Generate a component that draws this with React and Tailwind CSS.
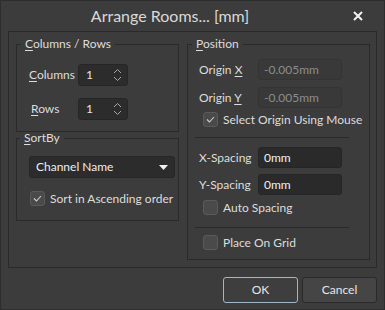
import React from 'react'

const font = { fontFamily: 'Lato, "Open Sans", sans-serif' }

function Check({ checked, label }) {
    return (
        <div className="flex items-center gap-[5px] h-[15px]">
            <div className="w-[15px] h-[15px] rounded-[3px] bg-[#4a4a4a] border border-[#5a5a5a] flex items-center justify-center">
                {checked && (
                    <svg width="11" height="11" viewBox="0 0 11 11">
                        <polyline points="2,5.5 4.5,8 9,3" fill="none" stroke="#cfcfcf" strokeWidth="1.1" />
                    </svg>
                )}
            </div>
            <span className="text-[12px] text-[#dcdcdc] leading-none">{label}</span>
        </div>
    )
}

function Spin({ value }) {
    return (
        <div className="w-[50px] h-[22px] rounded-[3px] bg-[#2c2c2c] border border-[#262626] flex items-center justify-between pl-[7px] pr-[5px]">
            <span className="text-[12px] text-[#e6e6e6] leading-none">{value}</span>
            <svg width="9" height="14" viewBox="0 0 9 14">
                <polyline points="1,5 4.5,1.5 8,5" fill="none" stroke="#a8a8a8" strokeWidth="1" />
                <polyline points="1,9 4.5,12.5 8,9" fill="none" stroke="#a8a8a8" strokeWidth="1" />
            </svg>
        </div>
    )
}

function Field({ label, value, disabled }) {
    return (
        <div className="flex items-center h-[21px]">
            <span className="w-[59px] text-[12px] text-[#dcdcdc] leading-none">{label}</span>
            <div className={`w-[84px] h-[21px] rounded-[3px] flex items-center pl-[5px] text-[12px] leading-none ${disabled ? 'bg-[#393939] border border-[#343434] text-[#8c8c8c]' : 'bg-[#2a2a2a] border border-[#262626] text-[#f0f0f0]'}`}>
                {value}
            </div>
        </div>
    )
}

export default function App() {
    return (
        <div className="w-[385px] h-[310px] bg-[#3c3c3c] border border-[#2d2d2d] flex flex-col" style={font}>
            {/* Title bar */}
            <div className="h-[30px] flex items-center">
                <div className="flex-1 flex justify-center">
                    <span className="text-[16px] text-[#d9d9d9] leading-none">Arrange Rooms... [mm]</span>
                </div>
                <div className="w-[45px] flex justify-center pr-[7px]">
                    <svg width="10" height="10" viewBox="0 0 10 10">
                        <path d="M1 1 L9 9 M9 1 L1 9" stroke="#f2f2f2" strokeWidth="2" />
                    </svg>
                </div>
            </div>

            {/* Main panel */}
            <div className="mx-[7px] h-[237px] border border-[#2a2a2a] flex gap-[8px] pl-[7px] pr-[6px] pt-[6px] pb-[7px]">
                {/* Left column */}
                <div className="w-[163px] flex flex-col">
                    <fieldset className="h-[94px] border border-[#2a2a2a]">
                        <legend className="ml-[4px] px-[4px] text-[12px] leading-[12px] text-[#dcdcdc]">
                            <u className="underline-offset-2">C</u>olumns / Rows
                        </legend>
                        <div className="pl-[12px] pt-[14px] flex flex-col gap-[12px]">
                            <div className="flex items-center">
                                <span className="w-[49px] text-[12px] text-[#dcdcdc] leading-none"><u className="underline-offset-2">C</u>olumns</span>
                                <Spin value="1" />
                            </div>
                            <div className="flex items-center">
                                <span className="w-[49px] pl-[2px] text-[12px] text-[#dcdcdc] leading-none"><u className="underline-offset-2">R</u>ows</span>
                                <Spin value="1" />
                            </div>
                        </div>
                    </fieldset>
                    <fieldset className="h-[89px] border border-[#2a2a2a]">
                        <legend className="ml-[3px] px-[4px] text-[12px] leading-[12px] text-[#dcdcdc]">
                            <u className="underline-offset-2">S</u>ortBy
                        </legend>
                        <div className="pl-[12px] pt-[12px]">
                            <div className="w-[146px] h-[22px] rounded-[3px] bg-[#2c2c2c] border border-[#262626] flex items-center justify-between pl-[6px] pr-[6px]">
                                <span className="text-[12px] text-[#ececec] leading-none">Channel Name</span>
                                <svg width="9" height="5" viewBox="0 0 9 5">
                                    <polygon points="0,0 9,0 4.5,5" fill="#f0f0f0" />
                                </svg>
                            </div>
                            <div className="mt-[13px] ml-[1px]">
                                <Check checked label="Sort in Ascending order" />
                            </div>
                        </div>
                    </fieldset>
                </div>

                {/* Right column */}
                <fieldset className="w-[183px] h-[222px] border border-[#2a2a2a]">
                    <legend className="ml-[4px] px-[4px] text-[12px] leading-[12px] text-[#dcdcdc]">
                        <u className="underline-offset-2">P</u>osition
                    </legend>
                    <div className="pl-[11px] pt-[9px] flex flex-col">
                        <Field label={<>Origin <u className="underline-offset-2">X</u></>} value="-0.005mm" disabled />
                        <div className="mt-[7px]">
                            <Field label={<>Origin <u className="underline-offset-2">Y</u></>} value="-0.005mm" disabled />
                        </div>
                        <div className="mt-[4px] ml-[4px]">
                            <Check checked label="Select Origin Using Mouse" />
                        </div>
                        <div className="mt-[10px] -ml-[4px] w-[154px] h-px bg-[#2a2a2a]" />
                        <div className="mt-[9px]">
                            <Field label="X-Spacing" value="0mm" />
                        </div>
                        <div className="mt-[6px]">
                            <Field label="Y-Spacing" value="0mm" />
                        </div>
                        <div className="mt-[5px] ml-[4px]">
                            <Check label="Auto Spacing" />
                        </div>
                        <div className="mt-[12px] -ml-[4px] w-[154px] h-px bg-[#2a2a2a]" />
                        <div className="mt-[7px] ml-[4px]">
                            <Check label="Place On Grid" />
                        </div>
                    </div>
                </fieldset>
            </div>

            {/* Buttons */}
            <div className="flex justify-end gap-[4px] pr-[7px] pt-[9px]">
                <button className="w-[75px] h-[26px] rounded-[3px] bg-[#3e3e3e] border border-[#a3b6c4] text-[12px] text-[#e6e6e6]">OK</button>
                <button className="w-[75px] h-[26px] rounded-[3px] bg-[#454545] border border-[#2a2a2a] text-[12px] text-[#e6e6e6]">Cancel</button>
            </div>
        </div>
    )
}
